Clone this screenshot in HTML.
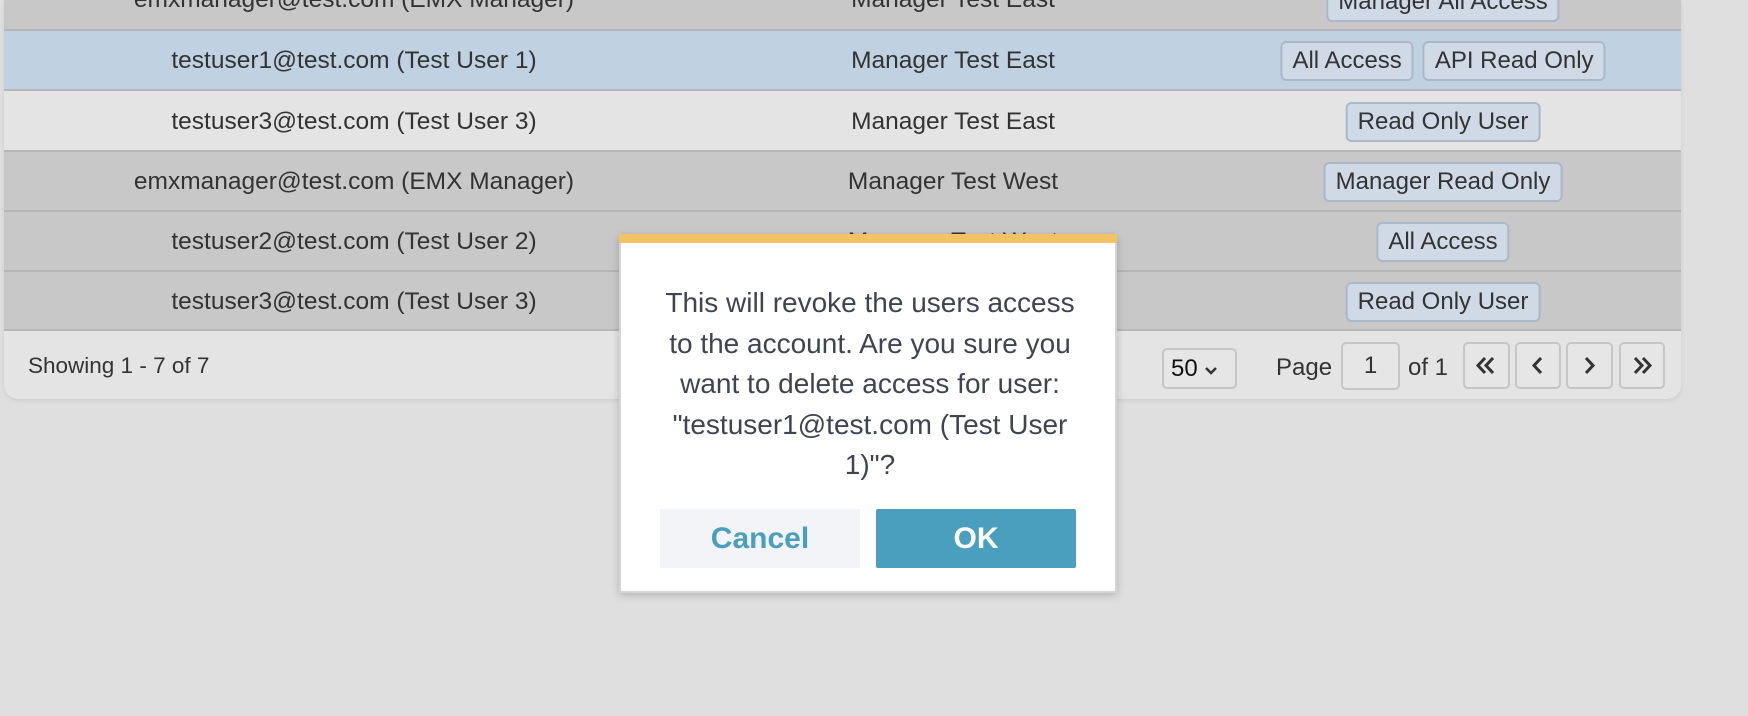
<!DOCTYPE html>
<html><head><style>
*{box-sizing:border-box;margin:0;padding:0}
body{width:1748px;height:716px;background:#dfdfdf;font-family:"Liberation Sans",Arial,sans-serif;position:relative;overflow:hidden;color:#333}
.tbl{position:absolute;left:4px;top:0;width:1677px;height:399px;border-radius:0 0 14px 14px;overflow:hidden;background:#e4e4e4;box-shadow:0 2px 4px rgba(0,0,0,.08)}
.row{position:absolute;left:0;width:100%;border-bottom:2px solid #b6b6b6;font-size:24.5px}
.row span{position:absolute;top:52%;transform:translate(-50%,-50%);white-space:nowrap}
.tags{position:absolute;left:1439px;top:52%;transform:translate(-50%,-50%);display:flex;gap:9px}
.tag{height:40px;border:2px solid #a9b8c8;background:#cfdae6;border-radius:6px;font-size:24px;line-height:36px;padding:0 10px;white-space:nowrap}
.pb{position:absolute;top:342px;height:47px;border:2px solid #c6c6c6;border-radius:5px;background:#e6e6e6}
.modal{position:absolute;left:619px;top:234px;width:498px;height:359px;background:#fff;border:2px solid #d4d4d4;box-shadow:0 2px 8px rgba(0,0,0,.2)}
</style></head><body>
<div class="tbl">
 <div class="row" style="top:0;height:31px;background:#c8c8c8"><span style="left:350px;top:0">emxmanager@test.com (EMX Manager)</span><span style="left:949px;top:0">Manager Test East</span><div class="tags" style="top:2px"><div class="tag">Manager All Access</div></div></div>
 <div class="row" style="top:31px;height:60px;background:#c0d1e2"><span style="left:350px">testuser1@test.com (Test User 1)</span><span style="left:949px">Manager Test East</span><div class="tags"><div class="tag">All Access</div><div class="tag">API Read Only</div></div></div>
 <div class="row" style="top:91px;height:61px;background:#e4e4e4"><span style="left:350px">testuser3@test.com (Test User 3)</span><span style="left:949px">Manager Test East</span><div class="tags"><div class="tag">Read Only User</div></div></div>
 <div class="row" style="top:152px;height:60px;background:#c8c8c8"><span style="left:350px">emxmanager@test.com (EMX Manager)</span><span style="left:949px">Manager Test West</span><div class="tags"><div class="tag">Manager Read Only</div></div></div>
 <div class="row" style="top:212px;height:60px;background:#c8c8c8"><span style="left:350px">testuser2@test.com (Test User 2)</span><span style="left:949px">Manager Test West</span><div class="tags"><div class="tag">All Access</div></div></div>
 <div class="row" style="top:272px;height:59px;background:#c8c8c8"><span style="left:350px">testuser3@test.com (Test User 3)</span><span style="left:949px">Manager Test West</span><div class="tags"><div class="tag">Read Only User</div></div></div>
 <div style="position:absolute;left:24px;top:353px;font-size:22.5px">Showing 1 - 7 of 7</div>
</div>
<div class="pb" style="left:1162px;top:348px;width:75px;height:41px;font-size:24px;line-height:37px;padding-left:7px;color:#111">50 <svg width="14" height="10"><path d="M2 2l5 5 5-5" stroke="#333" stroke-width="2.5" fill="none"/></svg></div>
<div style="position:absolute;left:1276px;top:354px;font-size:24px">Page</div>
<div class="pb" style="left:1341px;width:59px;height:48px;font-size:24px;text-align:center;line-height:44px">1</div>
<div style="position:absolute;left:1408px;top:354px;font-size:24px">of 1</div>
<div class="pb" style="left:1463px;width:47px"><svg width="43" height="43"><path d="M20 14l-7 7.5 7 7.5M28 14l-7 7.5 7 7.5" stroke="#333" stroke-width="3" fill="none"/></svg></div>
<div class="pb" style="left:1515px;width:46px"><svg width="42" height="43"><path d="M24 14l-7 7.5 7 7.5" stroke="#333" stroke-width="3" fill="none"/></svg></div>
<div class="pb" style="left:1566px;width:47px"><svg width="43" height="43"><path d="M18 14l7 7.5-7 7.5" stroke="#333" stroke-width="3" fill="none"/></svg></div>
<div class="pb" style="left:1619px;width:46px"><svg width="42" height="43"><path d="M14 14l7 7.5-7 7.5M22 14l7 7.5-7 7.5" stroke="#333" stroke-width="3" fill="none"/></svg></div>
<div class="modal">
 <div style="height:9px;background:#f3c262;margin:-2px -2px 0"></div>
 <div style="position:absolute;left:36px;width:426px;top:47px;text-align:center;font-size:28px;line-height:40.5px;color:#3f4452">This will revoke the users access to the account. Are you sure you want to delete access for user: "testuser1@test.com (Test User 1)"?</div>
 <div style="position:absolute;left:39px;top:273px;width:200px;height:59px;background:#f2f4f7;color:#4a9fbf;font-weight:bold;font-size:30px;text-align:center;line-height:59px">Cancel</div>
 <div style="position:absolute;left:255px;top:273px;width:200px;height:59px;background:#4a9fbf;color:#fff;font-weight:bold;font-size:30px;text-align:center;line-height:59px;border-radius:2px">OK</div>
</div>
</body></html>
